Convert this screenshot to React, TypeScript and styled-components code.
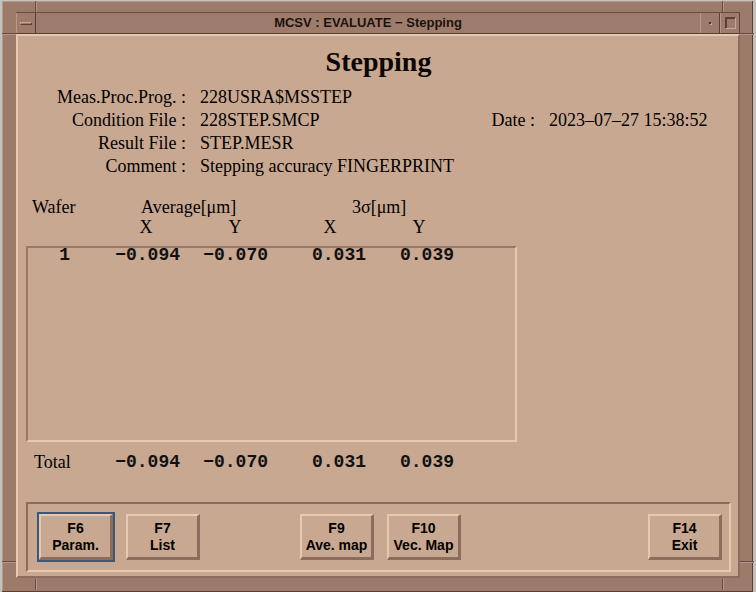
import React from "react";
import styled, { createGlobalStyle } from "styled-components";

const Global = createGlobalStyle`
  html, body { margin: 0; padding: 0; background: #c4c2c0; }
  body { width: 756px; height: 592px; overflow: hidden; }
  * { box-sizing: border-box; }
`;

const SERIF = `"Liberation Serif", "Times New Roman", serif`;
const SANS = `"Liberation Sans", Arial, sans-serif`;
const MONO = `"Liberation Mono", "Courier New", monospace`;

const BG = "#c9a891";
const LIGHT = "#e6c9b1";
const DARK = "#8c6c5c";
const FRAME = "#9c7b6b";

const Window = styled.div`
  position: relative;
  margin: 1px 0 0 2px;
  width: 751px;
  height: 591px;
  background: ${FRAME};
  border-right: 1px solid #5a3e30;
  border-bottom: 1px solid #5a3e30;
  box-shadow: inset 1px 1px 0 #b8998a;
  padding: 11px 12px 13px 14px;
  display: flex;
  flex-direction: column;
`;

const CornerMark = styled.div<{ $vertical?: boolean }>`
  position: absolute;
  background: #6a4c3e;
  box-shadow: ${(p) => (p.$vertical ? "1px 0 0 #b4968a" : "0 1px 0 #b4968a")};
  width: ${(p) => (p.$vertical ? "1px" : "14px")};
  height: ${(p) => (p.$vertical ? "11px" : "1px")};
`;

const TitleBar = styled.div`
  height: 22px;
  display: flex;
  align-items: stretch;
  background: #9e7c6c;
  border-top: 1px solid #6a4c3c;
  border-bottom: 1px solid #5c3e2e;
`;

const TitleButton = styled.div`
  width: 20px;
  display: flex;
  align-items: center;
  justify-content: center;
  border-left: 1px solid #b8988a;
  border-right: 1px solid #5c4030;
`;

const MenuBar = styled.div`
  width: 12px;
  height: 3px;
  border-top: 1px solid #c4a696;
  border-bottom: 1px solid #5c4030;
  border-left: 1px solid #c4a696;
  border-right: 1px solid #5c4030;
`;

const MinDot = styled.div`
  width: 2px;
  height: 2px;
  background: #4a3024;
  box-shadow: 1px 1px 0 #c4a696;
`;

const MaxBox = styled.div`
  width: 11px;
  height: 12px;
  border: 1px solid;
  border-color: #5c4030 #c4a696 #c4a696 #5c4030;
  box-shadow: 1px 1px 0 #5c4030 inset;
`;

const Title = styled.div`
  flex: 1;
  text-align: center;
  font: 700 13px/20px ${SANS};
  color: #1c120c;
`;

const Content = styled.div`
  flex: 1;
  background: ${BG};
  border: 2px solid;
  border-color: ${LIGHT} ${DARK} ${DARK} ${LIGHT};
  padding: 0 7px 4px 8px;
  display: flex;
  flex-direction: column;
  color: #000;
`;

const Heading = styled.h1`
  margin: 10px 0 0;
  text-align: center;
  font: 700 28px/32px ${SERIF};
  color: #0a0604;
`;

const InfoGrid = styled.div`
  margin-top: 8px;
  display: grid;
  grid-template-columns: 160px 277px 44px auto;
  column-gap: 14px;
  font: 400 18px/23px ${SERIF};
  white-space: nowrap;
`;

const Label = styled.span`
  text-align: right;
`;

const Value = styled.span``;

const HeadTop = styled.div`
  margin-top: 19px;
  padding-left: 6px;
  display: grid;
  grid-template-columns: 109px 211px auto;
  font: 400 18px/20px ${SERIF};
`;

const HeadAxis = styled.div`
  display: grid;
  grid-template-columns: 76px 88px 90px 100px 78px;
  text-align: center;
  font: 400 18px/20px ${SERIF};
`;

const ListBox = styled.div`
  margin-top: 9px;
  width: 491px;
  height: 196px;
  border: 2px solid;
  border-color: #98786a ${LIGHT} ${LIGHT} #98786a;
`;

const DataRow = styled.div<{ $first: number; $top?: number }>`
  display: grid;
  grid-template-columns: ${(p) => p.$first}px 110px 88px 98px 88px;
  justify-items: end;
  align-items: center;
  margin-top: ${(p) => p.$top ?? 0}px;
  height: ${(p) => (p.$top ? 20 : 14)}px;
  font: 700 18px/14px ${MONO};
  color: #111;
  white-space: nowrap;
`;

const TotalLabel = styled.span`
  justify-self: start;
  padding-left: 8px;
  font: 400 18px/20px ${SERIF};
  color: #000;
`;

const ButtonPanel = styled.div`
  margin-top: auto;
  height: 70px;
  border: 2px solid;
  border-color: ${DARK} ${LIGHT} ${LIGHT} ${DARK};
  padding: 10px 0 0 11px;
  display: grid;
  grid-template-columns: repeat(8, 74px);
  column-gap: 13px;
  align-items: start;
`;

const FButton = styled.button<{ $col: number; $focused?: boolean }>`
  grid-column: ${(p) => p.$col};
  height: 46px;
  padding: 0;
  background: ${BG};
  border-style: solid;
  border-width: 2px 3px 3px 2px;
  border-color: ${LIGHT} ${DARK} ${DARK} ${LIGHT};
  outline: ${(p) => (p.$focused ? "2px solid #3a5878" : "none")};
  display: flex;
  flex-direction: column;
  align-items: center;
  justify-content: center;
  font: 700 14px/17px ${SANS};
  color: #000;
`;

const rows = [{ w: "1", ax: "−0.094", ay: "−0.070", sx: "0.031", sy: "0.039" }];

const buttons = [
  { key: "F6", label: "Param.", col: 1, focused: true },
  { key: "F7", label: "List", col: 2 },
  { key: "F9", label: "Ave. map", col: 4 },
  { key: "F10", label: "Vec. Map", col: 5 },
  { key: "F14", label: "Exit", col: 8 },
];

export default function App() {
  return (
    <>
      <Global />
      <Window>
        <CornerMark $vertical style={{ left: 33, top: 0 }} />
        <CornerMark style={{ left: 0, top: 32 }} />
        <CornerMark $vertical style={{ left: 720, top: 0 }} />
        <CornerMark style={{ left: 738, top: 32 }} />
        <CornerMark style={{ left: 0, top: 560 }} />
        <CornerMark $vertical style={{ left: 33, top: 578 }} />
        <CornerMark style={{ left: 738, top: 560 }} />
        <CornerMark $vertical style={{ left: 720, top: 578 }} />
        <TitleBar>
          <TitleButton>
            <MenuBar />
          </TitleButton>
          <Title>MCSV : EVALUATE − Stepping</Title>
          <TitleButton>
            <MinDot />
          </TitleButton>
          <TitleButton>
            <MaxBox />
          </TitleButton>
        </TitleBar>
        <Content>
          <Heading>Stepping</Heading>
          <InfoGrid>
            <Label>Meas.Proc.Prog. :</Label>
            <Value>228USRA$MSSTEP</Value>
            <span />
            <span />
            <Label>Condition File :</Label>
            <Value>228STEP.SMCP</Value>
            <Label>Date :</Label>
            <Value>2023–07–27 15:38:52</Value>
            <Label>Result File :</Label>
            <Value>STEP.MESR</Value>
            <span />
            <span />
            <Label>Comment :</Label>
            <Value>Stepping accuracy FINGERPRINT</Value>
            <span />
            <span />
          </InfoGrid>
          <HeadTop>
            <span>Wafer</span>
            <span>Average[μm]</span>
            <span>3σ[μm]</span>
          </HeadTop>
          <HeadAxis>
            <span />
            <span>X</span>
            <span>Y</span>
            <span>X</span>
            <span>Y</span>
          </HeadAxis>
          <ListBox>
            {rows.map((r) => (
              <DataRow key={r.w} $first={42}>
                <span>{r.w}</span>
                <span>{r.ax}</span>
                <span>{r.ay}</span>
                <span>{r.sx}</span>
                <span>{r.sy}</span>
              </DataRow>
            ))}
          </ListBox>
          <DataRow $first={44} $top={10}>
            <TotalLabel>Total</TotalLabel>
            <span>−0.094</span>
            <span>−0.070</span>
            <span>0.031</span>
            <span>0.039</span>
          </DataRow>
          <ButtonPanel>
            {buttons.map((b) => (
              <FButton key={b.key} $col={b.col} $focused={b.focused}>
                <span>{b.key}</span>
                <span>{b.label}</span>
              </FButton>
            ))}
          </ButtonPanel>
        </Content>
      </Window>
    </>
  );
}
